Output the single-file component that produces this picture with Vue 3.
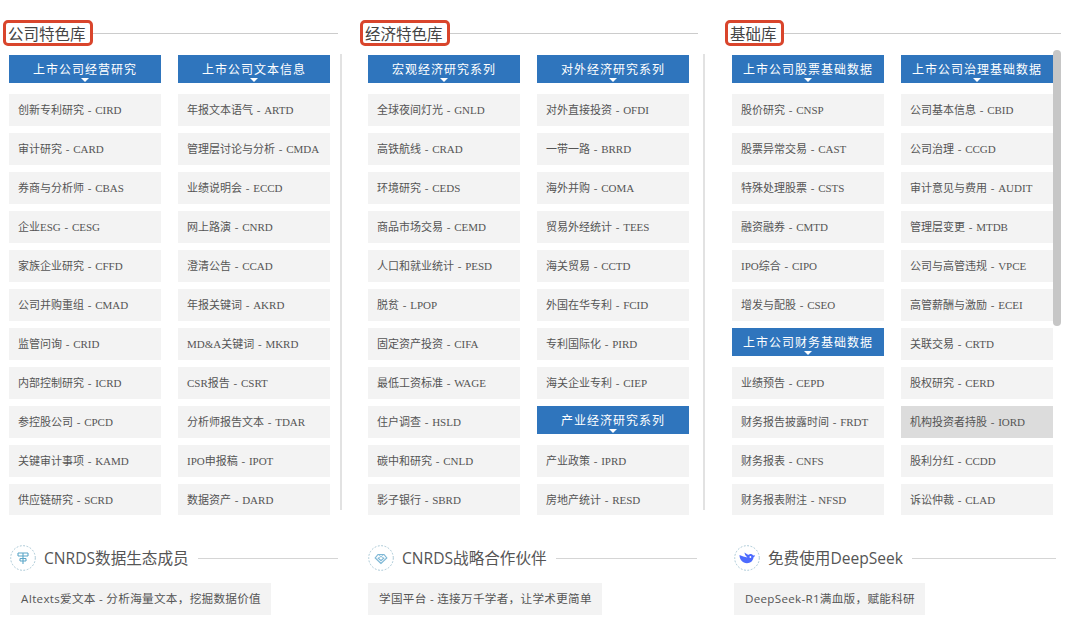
<script setup>
const sections = [
  {
    key: 's1', title: '公司特色库',
    columns: [
      [
        { head: '上市公司经营研究' },
        '创新专利研究 - CIRD', '审计研究 - CARD', '券商与分析师 - CBAS', '企业ESG - CESG', '家族企业研究 - CFFD', '公司并购重组 - CMAD',
        '监管问询 - CRID', '内部控制研究 - ICRD', '参控股公司 - CPCD', '关键审计事项 - KAMD', '供应链研究 - SCRD'
      ],
      [
        { head: '上市公司文本信息' },
        '年报文本语气 - ARTD', '管理层讨论与分析 - CMDA', '业绩说明会 - ECCD', '网上路演 - CNRD', '澄清公告 - CCAD', '年报关键词 - AKRD',
        'MD&A关键词 - MKRD', 'CSR报告 - CSRT', '分析师报告文本 - TDAR', 'IPO申报稿 - IPOT', '数据资产 - DARD'
      ]
    ],
    foot: { title: 'CNRDS数据生态成员', item: 'AItexts爱文本 - 分析海量文本，挖掘数据价值', icon: 'tower' }
  },
  {
    key: 's2', title: '经济特色库',
    columns: [
      [
        { head: '宏观经济研究系列' },
        '全球夜间灯光 - GNLD', '高铁航线 - CRAD', '环境研究 - CEDS', '商品市场交易 - CEMD', '人口和就业统计 - PESD', '脱贫 - LPOP',
        '固定资产投资 - CIFA', '最低工资标准 - WAGE', '住户调查 - HSLD', '碳中和研究 - CNLD', '影子银行 - SBRD'
      ],
      [
        { head: '对外经济研究系列' },
        '对外直接投资 - OFDI', '一带一路 - BRRD', '海外并购 - COMA', '贸易外经统计 - TEES', '海关贸易 - CCTD', '外国在华专利 - FCID',
        '专利国际化 - PIRD', '海关企业专利 - CIEP',
        { head: '产业经济研究系列' },
        '产业政策 - IPRD', '房地产统计 - RESD'
      ]
    ],
    foot: { title: 'CNRDS战略合作伙伴', item: '学国平台 - 连接万千学者，让学术更简单', icon: 'gem' }
  },
  {
    key: 's3', title: '基础库',
    columns: [
      [
        { head: '上市公司股票基础数据' },
        '股价研究 - CNSP', '股票异常交易 - CAST', '特殊处理股票 - CSTS', '融资融券 - CMTD', 'IPO综合 - CIPO', '增发与配股 - CSEO',
        { head: '上市公司财务基础数据' },
        '业绩预告 - CEPD', '财务报告披露时间 - FRDT', '财务报表 - CNFS', '财务报表附注 - NFSD'
      ],
      [
        { head: '上市公司治理基础数据' },
        '公司基本信息 - CBID', '公司治理 - CCGD', '审计意见与费用 - AUDIT', '管理层变更 - MTDB', '公司与高管违规 - VPCE', '高管薪酬与激励 - ECEI',
        '关联交易 - CRTD', '股权研究 - CERD', { text: '机构投资者持股 - IORD', active: true }, '股利分红 - CCDD', '诉讼仲裁 - CLAD'
      ]
    ],
    foot: { title: '免费使用DeepSeek', item: 'DeepSeek-R1满血版，赋能科研', icon: 'whale' }
  }
]
</script>

<template>
  <div class="page">
    <section v-for="s in sections" :key="s.key" class="section" :class="s.key">
      <div class="title-row">
        <h2 class="title">{{ s.title }}</h2>
        <span class="rule"></span>
      </div>
      <div class="body-row">
        <div class="columns">
          <div v-for="(col, ci) in s.columns" :key="ci" class="col">
            <template v-for="(entry, ei) in col" :key="ei">
              <div v-if="entry.head" class="head">{{ entry.head }}</div>
              <div v-else class="item" :class="{ active: entry.active }">{{ entry.text || entry }}</div>
            </template>
          </div>
        </div>
        <span v-if="s.key !== 's3'" class="vline"></span>
      </div>
      <div class="foot-row">
        <span class="badge">
          <svg width="26" height="26" viewBox="0 0 26 26">
            <circle cx="13" cy="13" r="12.3" fill="none" class="ring" stroke-dasharray="1.8 1.6" />
            <g v-if="s.foot.icon === 'tower'" fill="none" stroke="#5ba6c8" stroke-width="1.1">
              <path d="M8 8h10M8 11h10M8 8v3M18 8v3M13 8v11M10 13.500h6M10 16h6M10 13.500v2.500M16 13.500v2.500" />
            </g>
            <g v-else-if="s.foot.icon === 'gem'" fill="none" stroke="#7fb8d6" stroke-width="1.200">
              <path d="M13 18.500l-5.800-5.500 2.800-3.500h6l2.800 3.500zM9.800 12.800l3.200 3 3.200-3" />
              <path d="M10.500 10l5 3M15.500 10l-5 3" stroke-width="0.800" />
            </g>
            <g v-else>
              <path fill="#4d6bfe" d="M5.500 10C5.500 14.500 8.500 18.200 13 18.200c3.500 0 6-2.200 6.500-5.700.5-.5 1.200-1 1.500-2l-1-.3c-.4.4-.7.4-1 0-1-1.200-2.500-1.400-3.800-.7-1.200.5-2.400 0-3.200-1l-1.500-1c.3 2 1 3.500 3 5-3-.5-5.500-1.500-8-2.500z"/>
              <circle cx="16.400" cy="12" r="0.900" fill="#fff"/>
            </g>
          </svg>
        </span>
        <h3 class="foot-title">{{ s.foot.title }}</h3>
        <span class="foot-rule"></span>
      </div>
      <div class="foot-item">{{ s.foot.item }}</div>
      <div v-if="s.key === 's3'" class="scrollbar"></div>
    </section>
  </div>
</template>

<style scoped>
.page {
  display: flex;
  width: 1080px;
  height: 643px;
  overflow: hidden;
  background: #fff;
  font-family: "Liberation Serif", "Noto Sans CJK SC", serif;
  position: relative;
}
.section { flex: none; padding-top: 20px; box-sizing: border-box; }
.s1 { width: 359px; }
.s2 { width: 364px; }
.s3 { width: 357px; }

.title-row {
  display: flex;
  align-items: center;
  width: 335px;
  margin-left: 3px;
  height: 26px;
}
.s2 .title-row { margin-left: 1px; width: 338px; }
.s3 .title-row { margin-left: 2px; width: 336px; }
.title {
  margin: 0;
  flex: none;
  height: 26px;
  box-sizing: border-box;
  padding: 0 4px 0 2px;
  border: 3px solid #d9452c;
  border-radius: 5px;
  font: 400 15.500px/20px "Noto Sans CJK SC", sans-serif;
  color: #444;
}
.rule { flex: 1; height: 1px; background: #ccc; }

.body-row {
  display: flex;
  margin: 9px 0 0 9px;
  height: 460px;
}
.columns { display: flex; gap: 17px; height: 460px; overflow: hidden; }
.col { width: 152px; flex: none; }
.head {
  position: relative;
  height: 28px;
  margin-bottom: 11px;
  background: #2f75bd;
  color: #fff;
  font: 400 12px/28px "Noto Sans CJK SC", sans-serif;
  letter-spacing: 1px;
  text-align: center;
}
.head::after {
  content: "";
  position: absolute;
  left: 50%;
  bottom: 1px;
  margin-left: -4px;
  border-left: 4px solid transparent;
  border-right: 4px solid transparent;
  border-top: 4px solid #fff;
}
.item {
  height: 32px;
  margin-bottom: 7px;
  padding-left: 9px;
  background: #f3f3f3;
  color: #555;
  font-size: 11px;
  line-height: 32px;
  white-space: nowrap;
  word-spacing: 1px;
}
.item.active { background: #dcdcdc; }
.vline {
  flex: none;
  width: 2px;
  height: 456px;
  margin-top: -1px;
  background: #e2e2e2;
}
.s1 .vline { margin-left: 10px; }
.s2 .vline { margin-left: 14px; }

.foot-row {
  display: flex;
  align-items: center;
  margin: 30px 0 0 10px;
  width: 328px;
  height: 26px;
}
.s2 .foot-row { margin-left: 9px; width: 329px; }
.s3 .foot-row { margin-left: 11px; width: 322px; }
.badge { flex: none; width: 26px; height: 26px; margin-right: 8px; }
.badge svg { display: block; }
.ring { stroke: #9cc0cf; stroke-width: 0.9; }
.foot-title {
  margin: 0;
  flex: none;
  font: 400 15.600px/26px "Open Sans", "Noto Sans CJK SC", sans-serif;
  color: #555;
}
.foot-rule { flex: 1; height: 1px; background: #d5d5d5; margin-left: 9px; }
.foot-item {
  display: table;
  margin: 12px 0 0 10px;
  height: 32px;
  padding: 0 10px 0 11px;
  background: #f3f3f3;
  color: #555;
  font: 400 11.600px/32px "Open Sans", "Noto Sans CJK SC", sans-serif;
  letter-spacing: 0.3px;
  white-space: nowrap;
}
.s2 .foot-item { margin-left: 9px; }
.s3 .foot-item { margin-left: 11px; }
.scrollbar {
  position: absolute;
  left: 1053px;
  top: 50px;
  width: 8px;
  height: 276px;
  border-radius: 4px;
  background: #c6c6c6;
}
</style>
